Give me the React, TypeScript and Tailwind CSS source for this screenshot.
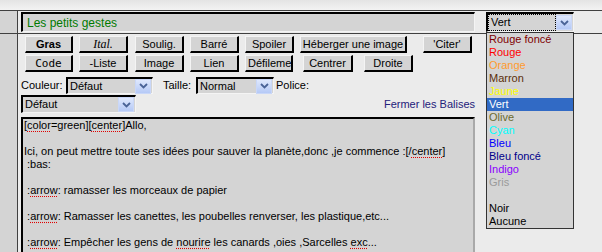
import React from 'react'

const font = "font-['Liberation_Sans',Arial,sans-serif]"

function Btn({ children, w = 'w-[49px]', className = '' }: { children: React.ReactNode; w?: string; className?: string }) {
  return (
    <div
      className={`${w} h-[17px] shrink-0 flex items-center justify-center overflow-hidden whitespace-nowrap bg-[#d4d4d4] border-t border-l border-t-[#f4f4f4] border-l-[#f4f4f4] border-b-2 border-r-2 border-b-black border-r-black text-[11px] leading-none text-black ${className}`}
    >
      {children}
    </div>
  )
}

function Arrow() {
  return (
    <div className="w-[16px] h-[15px] shrink-0 flex items-center justify-center bg-gradient-to-b from-[#dfe8fd] to-[#b5c9f6] border border-[#c9d7f8]">
      <svg width="9" height="6" viewBox="0 0 9 6">
        <path d="M1 1 L4.5 4.5 L8 1" stroke="#4a6397" strokeWidth="1.8" fill="none" />
      </svg>
    </div>
  )
}

function Select({ value, w, h = 'h-[17px]', focus = false }: { value: string; w: string; h?: string; focus?: boolean }) {
  return (
    <div className={`${w} ${h} shrink-0 flex items-center bg-[#d4d4d4] border-t-2 border-l-2 border-black border-b border-r border-b-[#f4f4f4] border-r-[#f4f4f4] pr-[1px]`}>
      <div className={`flex-1 h-full flex items-center pl-[2px] text-[11px] ${focus ? 'border border-dotted border-black' : ''}`}>
        {value}
      </div>
      <Arrow />
    </div>
  )
}

const Sp = ({ children }: { children: React.ReactNode }) => (
  <span className="underline decoration-dotted decoration-[#e00000] underline-offset-[2px]">{children}</span>
)

const colors: { label: string; cls: string }[] = [
  { label: 'Rouge foncé', cls: 'text-[#800000]' },
  { label: 'Rouge', cls: 'text-[#ff0000]' },
  { label: 'Orange', cls: 'text-[#ff9a2e]' },
  { label: 'Marron', cls: 'text-[#5a2e0a]' },
  { label: 'Jaune', cls: 'text-[#ffff00]' },
  { label: 'Vert', cls: 'text-white bg-[#316ac5]' },
  { label: 'Olive', cls: 'text-[#6b6b2e]' },
  { label: 'Cyan', cls: 'text-[#00ffff]' },
  { label: 'Bleu', cls: 'text-[#0000ff]' },
  { label: 'Bleu foncé', cls: 'text-[#00008b]' },
  { label: 'Indigo', cls: 'text-[#8a00ff]' },
  { label: 'Gris', cls: 'text-[#9a9a9a]' },
  { label: '', cls: '' },
  { label: 'Noir', cls: 'text-black' },
  { label: 'Aucune', cls: 'text-black' },
]

export default function App() {
  return (
    <div className={`relative w-[602px] h-[252px] overflow-hidden bg-[#ebebeb] text-black ${font}`}>
      <div className="h-[10px] bg-gradient-to-b from-[#e4e4e4] to-[#f3f3f3]" />

      {/* title row */}
      <div className="flex h-[24px] border-t border-b border-[#404040]">
        <div className="w-[18px] shrink-0 bg-[#d4d4d4] border-r border-[#404040]" />
        <div className="flex items-start pl-[3px] pt-[1px]">
          <div className="w-[454px] h-[20px] flex items-center pl-[4px] bg-[#d4d4d4] border-t-2 border-l-2 border-black border-b border-r border-b-[#f4f4f4] border-r-[#f4f4f4] text-[12px] text-[#007a00]">
            Les petits gestes
          </div>
          <div className="ml-[11px]">
            <Select value="Vert" w="w-[88px]" h="h-[20px]" focus />
          </div>
        </div>
      </div>

      {/* body */}
      <div className="flex h-full">
        <div className="w-[18px] shrink-0 bg-[#d4d4d4] border-r border-[#404040]" />
        <div className="flex flex-col pl-[3px] pt-[2px]">
          <div className="flex ml-[4px]">
            <Btn w="w-[48px]" className="font-bold">Gras</Btn>
            <Btn className="ml-[6px] italic font-['Liberation_Serif',serif] text-[12px]">Ital.</Btn>
            <Btn className="ml-[7px]">Soulig.</Btn>
            <Btn className="ml-[6px]">Barré</Btn>
            <Btn className="ml-[6px]">Spoiler</Btn>
            <Btn w="w-[107px]" className="ml-[6px]">Héberger une image</Btn>
            <Btn className="ml-[16px]">'Citer'</Btn>
          </div>
          <div className="flex ml-[4px] mt-[2px]">
            <Btn w="w-[48px]" className="font-['DejaVu_Sans_Mono',monospace] text-[10px]">Code</Btn>
            <Btn className="ml-[6px]">-Liste</Btn>
            <Btn className="ml-[7px]">Image</Btn>
            <Btn className="ml-[6px]">Lien</Btn>
            <Btn w="w-[48px]" className="ml-[6px] justify-start pl-[2px]">Défileme</Btn>
            <Btn w="w-[50px]" className="ml-[10px]">Centrer</Btn>
            <Btn className="ml-[11px]">Droite</Btn>
          </div>

          <div className="flex items-center mt-[5px] h-[17px] text-[11px]">
            <span className="w-[45px]">Couleur:</span>
            <Select value="Défaut" w="w-[87px]" />
            <span className="ml-[10px] w-[33px]">Taille:</span>
            <Select value="Normal" w="w-[78px]" />
            <span className="ml-[2px]">Police:</span>
          </div>

          <div className="flex items-center justify-between w-[454px] mt-[1px] h-[18px] text-[11px]">
            <Select value="Défaut" w="w-[115px]" h="h-[18px]" />
            <span className="text-[#23207a]">Fermer les Balises</span>
          </div>

          <div className="mt-[4px] w-[454px] h-[200px] bg-[#d4d4d4] border-t-2 border-l-2 border-black border-r-2 border-r-[#a9a9a9] pl-[1px] text-[11px] leading-[13px] whitespace-pre">
            <div>[<Sp>color</Sp>=green][<Sp>center</Sp>]Allo,</div>
            <div>&nbsp;</div>
            <div>Ici, on peut mettre toute ses idées pour sauver la planète,donc ,je commence :[/<Sp>center</Sp>]</div>
            <div> :bas:</div>
            <div>&nbsp;</div>
            <div> :<Sp>arrow</Sp>: ramasser les morceaux de papier</div>
            <div>&nbsp;</div>
            <div> :<Sp>arrow</Sp>: Ramasser les canettes, les poubelles renverser, les plastique,etc...</div>
            <div>&nbsp;</div>
            <div> :<Sp>arrow</Sp>: Empêcher les gens de <Sp>nourire</Sp> les canards ,oies ,Sarcelles <Sp>exc</Sp>...</div>
          </div>
        </div>
      </div>

      {/* open dropdown */}
      <div className="absolute left-[486px] top-[32px] w-[88px] bg-[#d4d4d4] border border-[#333]">
        {colors.map((c, i) => (
          <div key={i} className={`h-[13px] leading-[13px] pl-[2px] text-[11px] whitespace-nowrap ${c.cls}`}>
            {c.label}
          </div>
        ))}
      </div>
    </div>
  )
}
